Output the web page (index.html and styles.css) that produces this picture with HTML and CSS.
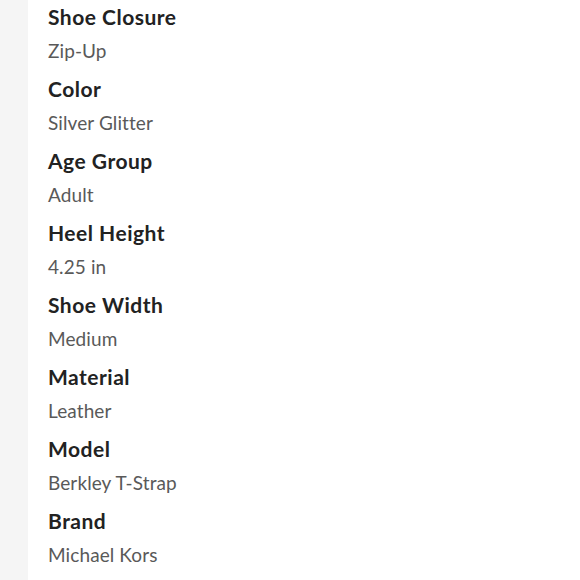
FILE: index.html
```html
<!DOCTYPE html>
<html>
<head>
<meta charset="utf-8">
<link rel="stylesheet" href="styles.css">
</head>
<body>
<div class="page">
  <div class="strip"></div>
  <dl class="specs">
    <dt>Shoe Closure</dt><dd>Zip-Up</dd>
    <dt>Color</dt><dd>Silver Glitter</dd>
    <dt>Age Group</dt><dd>Adult</dd>
    <dt>Heel Height</dt><dd>4.25 in</dd>
    <dt>Shoe Width</dt><dd>Medium</dd>
    <dt>Material</dt><dd>Leather</dd>
    <dt>Model</dt><dd>Berkley T-Strap</dd>
    <dt>Brand</dt><dd>Michael Kors</dd>
  </dl>
</div>
</body>
</html>
```
FILE: styles.css
```css
html, body {
  margin: 0;
  padding: 0;
  background: #ffffff;
}
.page {
  display: flex;
  width: 580px;
  height: 580px;
  overflow: hidden;
}
.strip {
  width: 28px;
  flex: none;
  background: #f5f5f5;
}
.specs {
  margin: 0;
  padding: 0 0 0 20px;
  font-family: Lato, "Noto Sans", sans-serif;
}
.specs dt {
  font-size: 21px;
  font-weight: 700;
  color: #222222;
  line-height: 34px;
  letter-spacing: 0.5px;
}
.specs dd {
  margin: 0 0 4px 0;
  font-size: 19px;
  font-weight: 400;
  color: #595959;
  line-height: 34px;
  letter-spacing: 0.1px;
}
```
